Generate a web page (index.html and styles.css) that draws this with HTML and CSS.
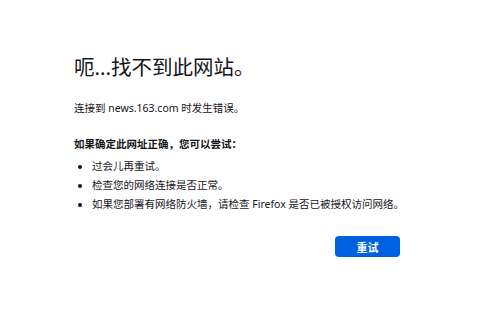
FILE: index.html
```html
<!DOCTYPE html>
<html lang="zh-CN">
<head>
<meta charset="utf-8">
<link rel="stylesheet" href="styles.css">
</head>
<body>
<main class="container">
  <h1 class="title">呃...找不到此网站。</h1>
  <p class="desc">连接到 news.163.com 时发生错误。</p>
  <p class="hint">如果确定此网址正确，您可以尝试：</p>
  <ul class="tips">
    <li>过会儿再重试。</li>
    <li>检查您的网络连接是否正常。</li>
    <li>如果您部署有网络防火墙，请检查 Firefox 是否已被授权访问网络。</li>
  </ul>
  <div class="actions">
    <button class="retry">重试</button>
  </div>
</main>
</body>
</html>
```
FILE: styles.css
```css
html, body {
  margin: 0;
  padding: 0;
  background: #fff;
}
body {
  font-family: "Noto Sans", "Noto Sans CJK SC", sans-serif;
  color: #15141a;
  font-size: 10.5px;
}
.container {
  width: 326px;
  padding: 50px 0 0 74px;
}
.title {
  font-size: 20.5px;
  font-weight: 400;
  margin: 0 0 16px;
  line-height: 34px;
}
.desc {
  margin: 0 0 20px;
  line-height: 16px;
}
.hint {
  font-weight: 700;
  margin: 0 0 5px;
  line-height: 16px;
}
.tips {
  margin: 0;
  padding-left: 18px;
}
.tips li {
  line-height: 19px;
  white-space: nowrap;
}
.actions {
  display: flex;
  justify-content: flex-end;
  margin-top: 22px;
}
.retry {
  font-family: inherit;
  font-size: 11px;
  font-weight: 700;
  color: #fff;
  background: #0061e0;
  border: none;
  border-radius: 4px;
  width: 65px;
  height: 21px;
  padding: 0;
}
```
